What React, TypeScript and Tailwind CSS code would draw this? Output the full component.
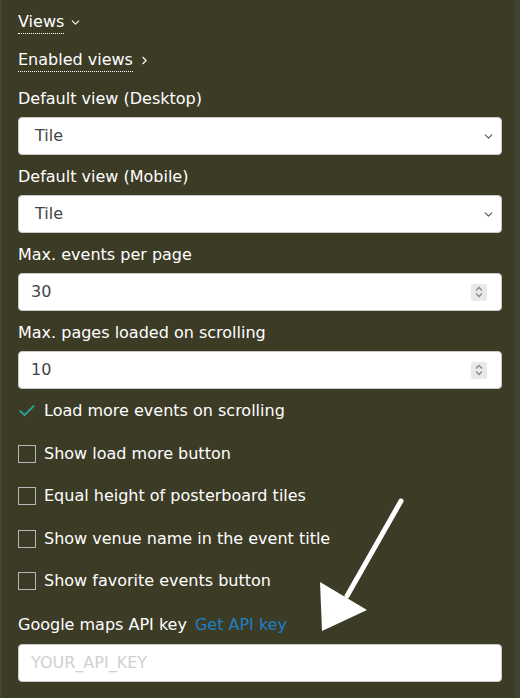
import { ChevronDown, ChevronRight, Check } from 'lucide-react';

const font = { fontFamily: '"DejaVu Sans", "Noto Sans", sans-serif' };

function Label({ children }: { children: React.ReactNode }) {
  return <div className="text-[16px] leading-[23px] text-white">{children}</div>;
}

function SelectBox({ value }: { value: string }) {
  return (
    <div className="flex h-[38px] items-center justify-between rounded-[4px] border border-[#c8c8c8] bg-white pl-[16px] pr-[6px] text-[16px] text-[#444]">
      <span>{value}</span>
      <ChevronDown size={13} strokeWidth={2} className="text-[#555]" />
    </div>
  );
}

function NumberBox({ value }: { value: string }) {
  return (
    <div className="flex h-[38px] items-center justify-between rounded-[4px] border border-[#c8c8c8] bg-white pl-[12px] pr-[14px] text-[16px] text-[#444]">
      <span>{value}</span>
      <div className="flex h-[17px] w-[16px] flex-col items-center justify-center rounded-[2px] bg-[#e9e9ed] text-[#888]">
        <svg width="10" height="14" viewBox="0 0 10 14" fill="none" stroke="currentColor" strokeWidth="1.3">
          <path d="M2 5.5 L5 2.5 L8 5.5" />
          <path d="M2 8.5 L5 11.5 L8 8.5" />
        </svg>
      </div>
    </div>
  );
}

function CheckRow({ label, checked }: { label: string; checked?: boolean }) {
  return (
    <div className="flex h-[42.5px] items-center gap-[8px]">
      {checked ? (
        <Check size={20} strokeWidth={2.2} className="ml-[-1px] mr-[-1px] text-[#2aa198]" />
      ) : (
        <div className="h-[18px] w-[18px] border-[1.5px] border-[#b8b8b8]" />
      )}
      <span className="text-[16px] text-white">{label}</span>
    </div>
  );
}

export default function App() {
  return (
    <div
      className="relative h-[698px] w-[520px] overflow-hidden border-l-[2px] border-r-[5px] border-l-[#46452f] border-r-[#434230] bg-[#3c3b26]"
      style={font}
    >
      <div className="flex flex-col pl-[16px] pr-[13px] pt-[11px]">
        <div className="flex items-center gap-[5px]">
          <span className="border-b border-dotted border-white text-[16px] leading-[22px] text-white">Views</span>
          <ChevronDown size={13} className="text-white" />
        </div>
        <div className="mt-[15px] flex items-center gap-[5px]">
          <span className="border-b border-dotted border-white text-[16px] leading-[22px] text-white">Enabled views</span>
          <ChevronRight size={13} className="text-white" />
        </div>
        <div className="mt-[15px] flex flex-col gap-[7px]">
          <Label>Default view (Desktop)</Label>
          <SelectBox value="Tile" />
        </div>
        <div className="mt-[10px] flex flex-col gap-[7px]">
          <Label>Default view (Mobile)</Label>
          <SelectBox value="Tile" />
        </div>
        <div className="mt-[10px] flex flex-col gap-[7px]">
          <Label>Max. events per page</Label>
          <NumberBox value="30" />
        </div>
        <div className="mt-[10px] flex flex-col gap-[7px]">
          <Label>Max. pages loaded on scrolling</Label>
          <NumberBox value="10" />
        </div>
        <div className="mt-[1px] flex flex-col">
          <CheckRow label="Load more events on scrolling" checked />
          <CheckRow label="Show load more button" />
          <CheckRow label="Equal height of posterboard tiles" />
          <CheckRow label="Show venue name in the event title" />
          <CheckRow label="Show favorite events button" />
        </div>
        <div className="mt-[12px] flex items-center gap-[8px] text-[16px] leading-[20px]">
          <span className="text-white">Google maps API key</span>
          <a className="text-[#1c80c4]">Get API key</a>
        </div>
        <div className="mt-[9px] flex h-[38px] items-center rounded-[4px] border border-[#c8c8c8] bg-white pl-[12px] text-[16px] text-[#d0d0d0]">
          YOUR_API_KEY
        </div>
      </div>
      <svg className="absolute left-0 top-0" width="520" height="698" viewBox="0 0 520 698">
        <line x1="399" y1="501" x2="345" y2="596" stroke="white" strokeWidth="5" strokeLinecap="round" />
        <polygon points="318,582 365,610 320,631" fill="white" />
      </svg>
    </div>
  );
}
